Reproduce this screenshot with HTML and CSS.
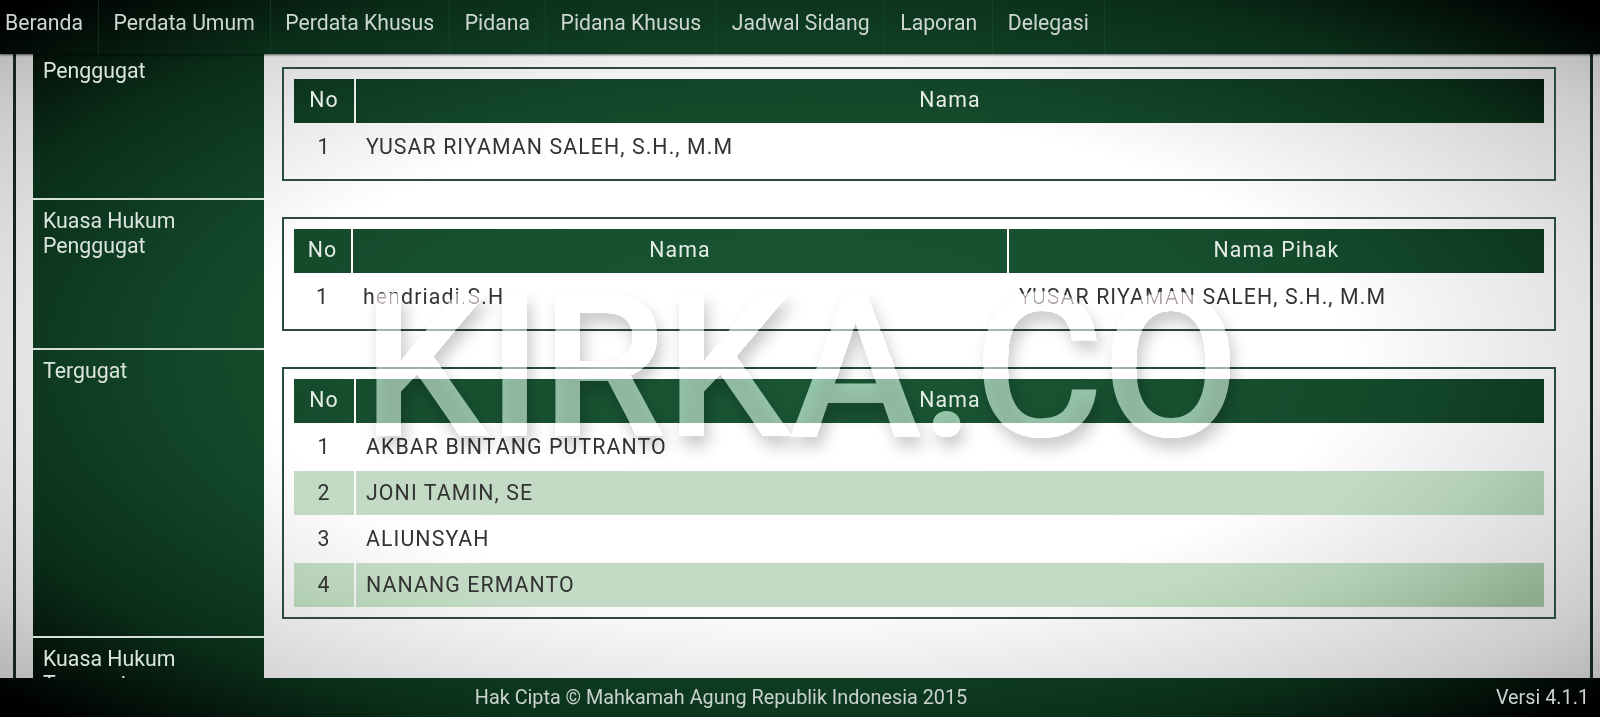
FILE: index.html
```html
<!DOCTYPE html>
<html lang="en">

<head>
    <meta charset="UTF-8">
    <title>Informasi Perkara</title>
    <link rel="stylesheet" href="styles.css">
</head>

<body>
    <!-- Top menu -->
    <nav class="menu">
        <a href="#">Beranda</a>
        <a href="#">Perdata Umum</a>
        <a href="#">Perdata Khusus</a>
        <a href="#">Pidana</a>
        <a href="#">Pidana Khusus</a>
        <a href="#">Jadwal Sidang</a>
        <a href="#">Laporan</a>
        <a href="#">Delegasi</a>
    </nav>

    <main class="viewport">
        <div class="detail">
            <div class="detail-row">
                <div class="label">Penggugat</div>
                <div class="value">
                    <div class="box">
                        <table class="list">
                            <thead>
                                <tr><th class="col-no">No</th><th>Nama</th></tr>
                            </thead>
                            <tbody>
                                <tr><td class="num">1</td><td>YUSAR RIYAMAN SALEH, S.H., M.M</td></tr>
                            </tbody>
                        </table>
                    </div>
                </div>
            </div>

            <div class="detail-row">
                <div class="label">Kuasa Hukum<br>Penggugat</div>
                <div class="value">
                    <div class="box">
                        <table class="list">
                            <thead>
                                <tr><th class="col-no-small">No</th><th class="col-name">Nama</th><th>Nama Pihak</th></tr>
                            </thead>
                            <tbody>
                                <tr><td class="num">1</td><td>hendriadi.S.H</td><td>YUSAR RIYAMAN SALEH, S.H., M.M</td></tr>
                            </tbody>
                        </table>
                    </div>
                </div>
            </div>

            <div class="detail-row">
                <div class="label">Tergugat</div>
                <div class="value">
                    <div class="box">
                        <table class="list">
                            <thead>
                                <tr><th class="col-no">No</th><th>Nama</th></tr>
                            </thead>
                            <tbody>
                                <tr><td class="num">1</td><td>AKBAR BINTANG PUTRANTO</td></tr>
                                <tr><td class="num">2</td><td>JONI TAMIN, SE</td></tr>
                                <tr><td class="num">3</td><td>ALIUNSYAH</td></tr>
                                <tr><td class="num">4</td><td>NANANG ERMANTO</td></tr>
                            </tbody>
                        </table>
                    </div>
                </div>
            </div>

            <div class="detail-row">
                <div class="label">Kuasa Hukum<br>Tergugat</div>
                <div class="value"></div>
            </div>
        </div>
    </main>

    <footer class="footer">
        <span class="copyright">Hak Cipta © Mahkamah Agung Republik Indonesia 2015</span>
        <span class="version">Versi 4.1.1</span>
    </footer>

    <!-- Watermark over the page -->
    <div class="watermark"><span>KIRKA.CO</span></div>
</body>

</html>
```

FILE: styles.css
```css
/* Every surface uses a fixed gradient so the vignette runs across the whole window */
body {
    font-family: 'Roboto', sans-serif;
    margin: 0;
    height: 100vh;
    overflow: hidden;
    display: flex;
    flex-direction: column;
    position: relative;
    color: #333;
    background: radial-gradient(ellipse farthest-corner at center, #fff 0%, #fff 48%, #e2e2e2 70%, #cdcdcd 85%, #aaa 100%) fixed;
}

.menu,
.footer,
.label,
.list th {
    background: radial-gradient(ellipse farthest-corner at center, #1a5735 0%, #174e2e 40%, #134628 55%, #0e3a21 66%, #0a2e19 77%, #000 97%) fixed;
}

.menu {
    display: flex;
    flex: none;
    height: 54px;
    box-shadow: 0 1px 2px rgba(0, 0, 0, .6);
    position: relative;
    z-index: 1;
}

.menu a {
    display: flex;
    align-items: center;
    padding: 0 14.8px 10px;
    color: #cdd6d1;
    font-size: 21.2px;
    text-decoration: none;
    border-right: 1px solid rgba(26, 90, 55, .4);
}

.menu a:first-child {
    padding-left: 5px;
}

.viewport {
    flex: 1;
    min-height: 0;
    overflow: hidden;
    margin: 0 7px 0 13px;
    padding-left: 17px;
    border-left: 3px solid #14251c;
    border-right: 3px solid #14251c;
}

/* page is scrolled a little, the first row starts under the menu */
.detail {
    margin-top: -4px;
}

.detail-row {
    display: flex;
}

.label {
    flex: none;
    width: 231px;
    box-sizing: border-box;
    padding: 9px 10px;
    border-bottom: 2px solid #d5e0d8;
    color: #dbe4de;
    font-size: 21.3px;
    line-height: 24.5px;
}

.value {
    flex: 1;
    padding: 17px 34px 19px 18px;
}

.box {
    border: 2px solid #2a4a3f;
    padding: 8px;
}

.list {
    width: 100%;
    border-spacing: 2px;
    table-layout: fixed;
    font-size: 21.3px;
    letter-spacing: 1.1px;
}

.list th {
    height: 44px;
    padding: 0 0 3px;
    box-sizing: border-box;
    color: #e6ede8;
    font-weight: 400;
    text-align: center;
}

.list td {
    height: 44px;
    padding: 0 10px 2px;
    box-sizing: border-box;
}

.list td.num {
    text-align: center;
}

.list tbody tr:nth-child(even) td {
    background: radial-gradient(ellipse farthest-corner at center, #c5dcc6 0%, #c2dac3 55%, #b4d0b5 64%, #a3c0a4 72%, #8fab8e 80%) fixed;
}

.col-no {
    width: 60px;
}

.col-no-small {
    width: 57px;
}

.col-name {
    width: 654px;
}

.footer {
    flex: none;
    height: 39px;
    display: flex;
    align-items: center;
    font-size: 19.8px;
    color: #c9d2cd;
    position: relative;
    z-index: 1;
}

.copyright {
    width: 1442px;
    text-align: center;
}

.version {
    margin-left: auto;
    padding-right: 11px;
}

/* letters are added to what is under them, so they clip to white on the page and
   come out pale green on the dark bars. shadow sits in its own layer */
.watermark {
    position: absolute;
    left: 362px;
    top: 253px;
    font-size: 200px;
    font-weight: 500;
    line-height: 230px;
    letter-spacing: -2px;
    pointer-events: none;
    white-space: nowrap;
}

.watermark::before {
    content: "KIRKA.CO";
    position: absolute;
    left: 0;
    top: 0;
    color: transparent;
    text-shadow: 4px 10px 16px rgba(0, 0, 0, .22);
}

.watermark span {
    position: relative;
    color: #7c7478;
    mix-blend-mode: plus-lighter;
}
```
